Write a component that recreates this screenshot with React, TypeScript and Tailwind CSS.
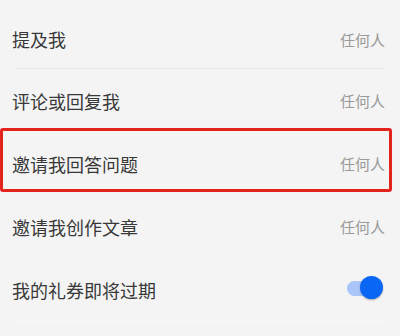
import React from "react";

const rows = [
  { label: "评论或回复我", value: "任何人" },
  { label: "邀请我回答问题", value: "任何人" },
  { label: "邀请我创作文章", value: "任何人" },
];

function Row({ label, value, h }: { label: string; value: string; h: string }) {
  return (
    <div className={`flex items-center justify-between pl-[12px] pr-[15px] ${h}`}>
      <span className="text-[18px] leading-none text-[#383838]">{label}</span>
      <span className="text-[15px] leading-none text-[#9a9a9a]">{value}</span>
    </div>
  );
}

export default function App() {
  return (
    <div
      className="relative w-[400px] h-[336px] bg-[#f4f4f4] overflow-hidden pt-[10px]"
      style={{ fontFamily: '"Noto Sans CJK SC", "Noto Sans", sans-serif' }}
    >
      <Row label="提及我" value="任何人" h="h-[58px]" />
      <div className="mx-[15px] h-px bg-[#e9e9e9]" />
      {rows.map((r) => (
        <Row key={r.label} label={r.label} value={r.value} h="h-[63px]" />
      ))}
      <div className="flex items-center justify-between pl-[12px] pr-[15px] h-[63px]">
        <span className="text-[18px] leading-none text-[#383838]">我的礼券即将过期</span>
        <div className="relative w-[40px] h-[24px] -mt-[4px]">
          <div className="absolute left-[2px] top-[5px] w-[34px] h-[15px] rounded-full bg-[#a9c5f9]" />
          <div className="absolute right-[2px] top-0 w-[23px] h-[23px] rounded-full bg-[#0a66f5] shadow-[0_1px_2px_rgba(0,0,0,0.3)]" />
        </div>
      </div>
      <div className="mx-[15px] h-px bg-[#f9f9f9]" />
      <div className="pointer-events-none absolute left-0 top-[128px] w-[392px] h-[64px] rounded-[3px] border-[3px] border-[#e5231d]" />
    </div>
  );
}
